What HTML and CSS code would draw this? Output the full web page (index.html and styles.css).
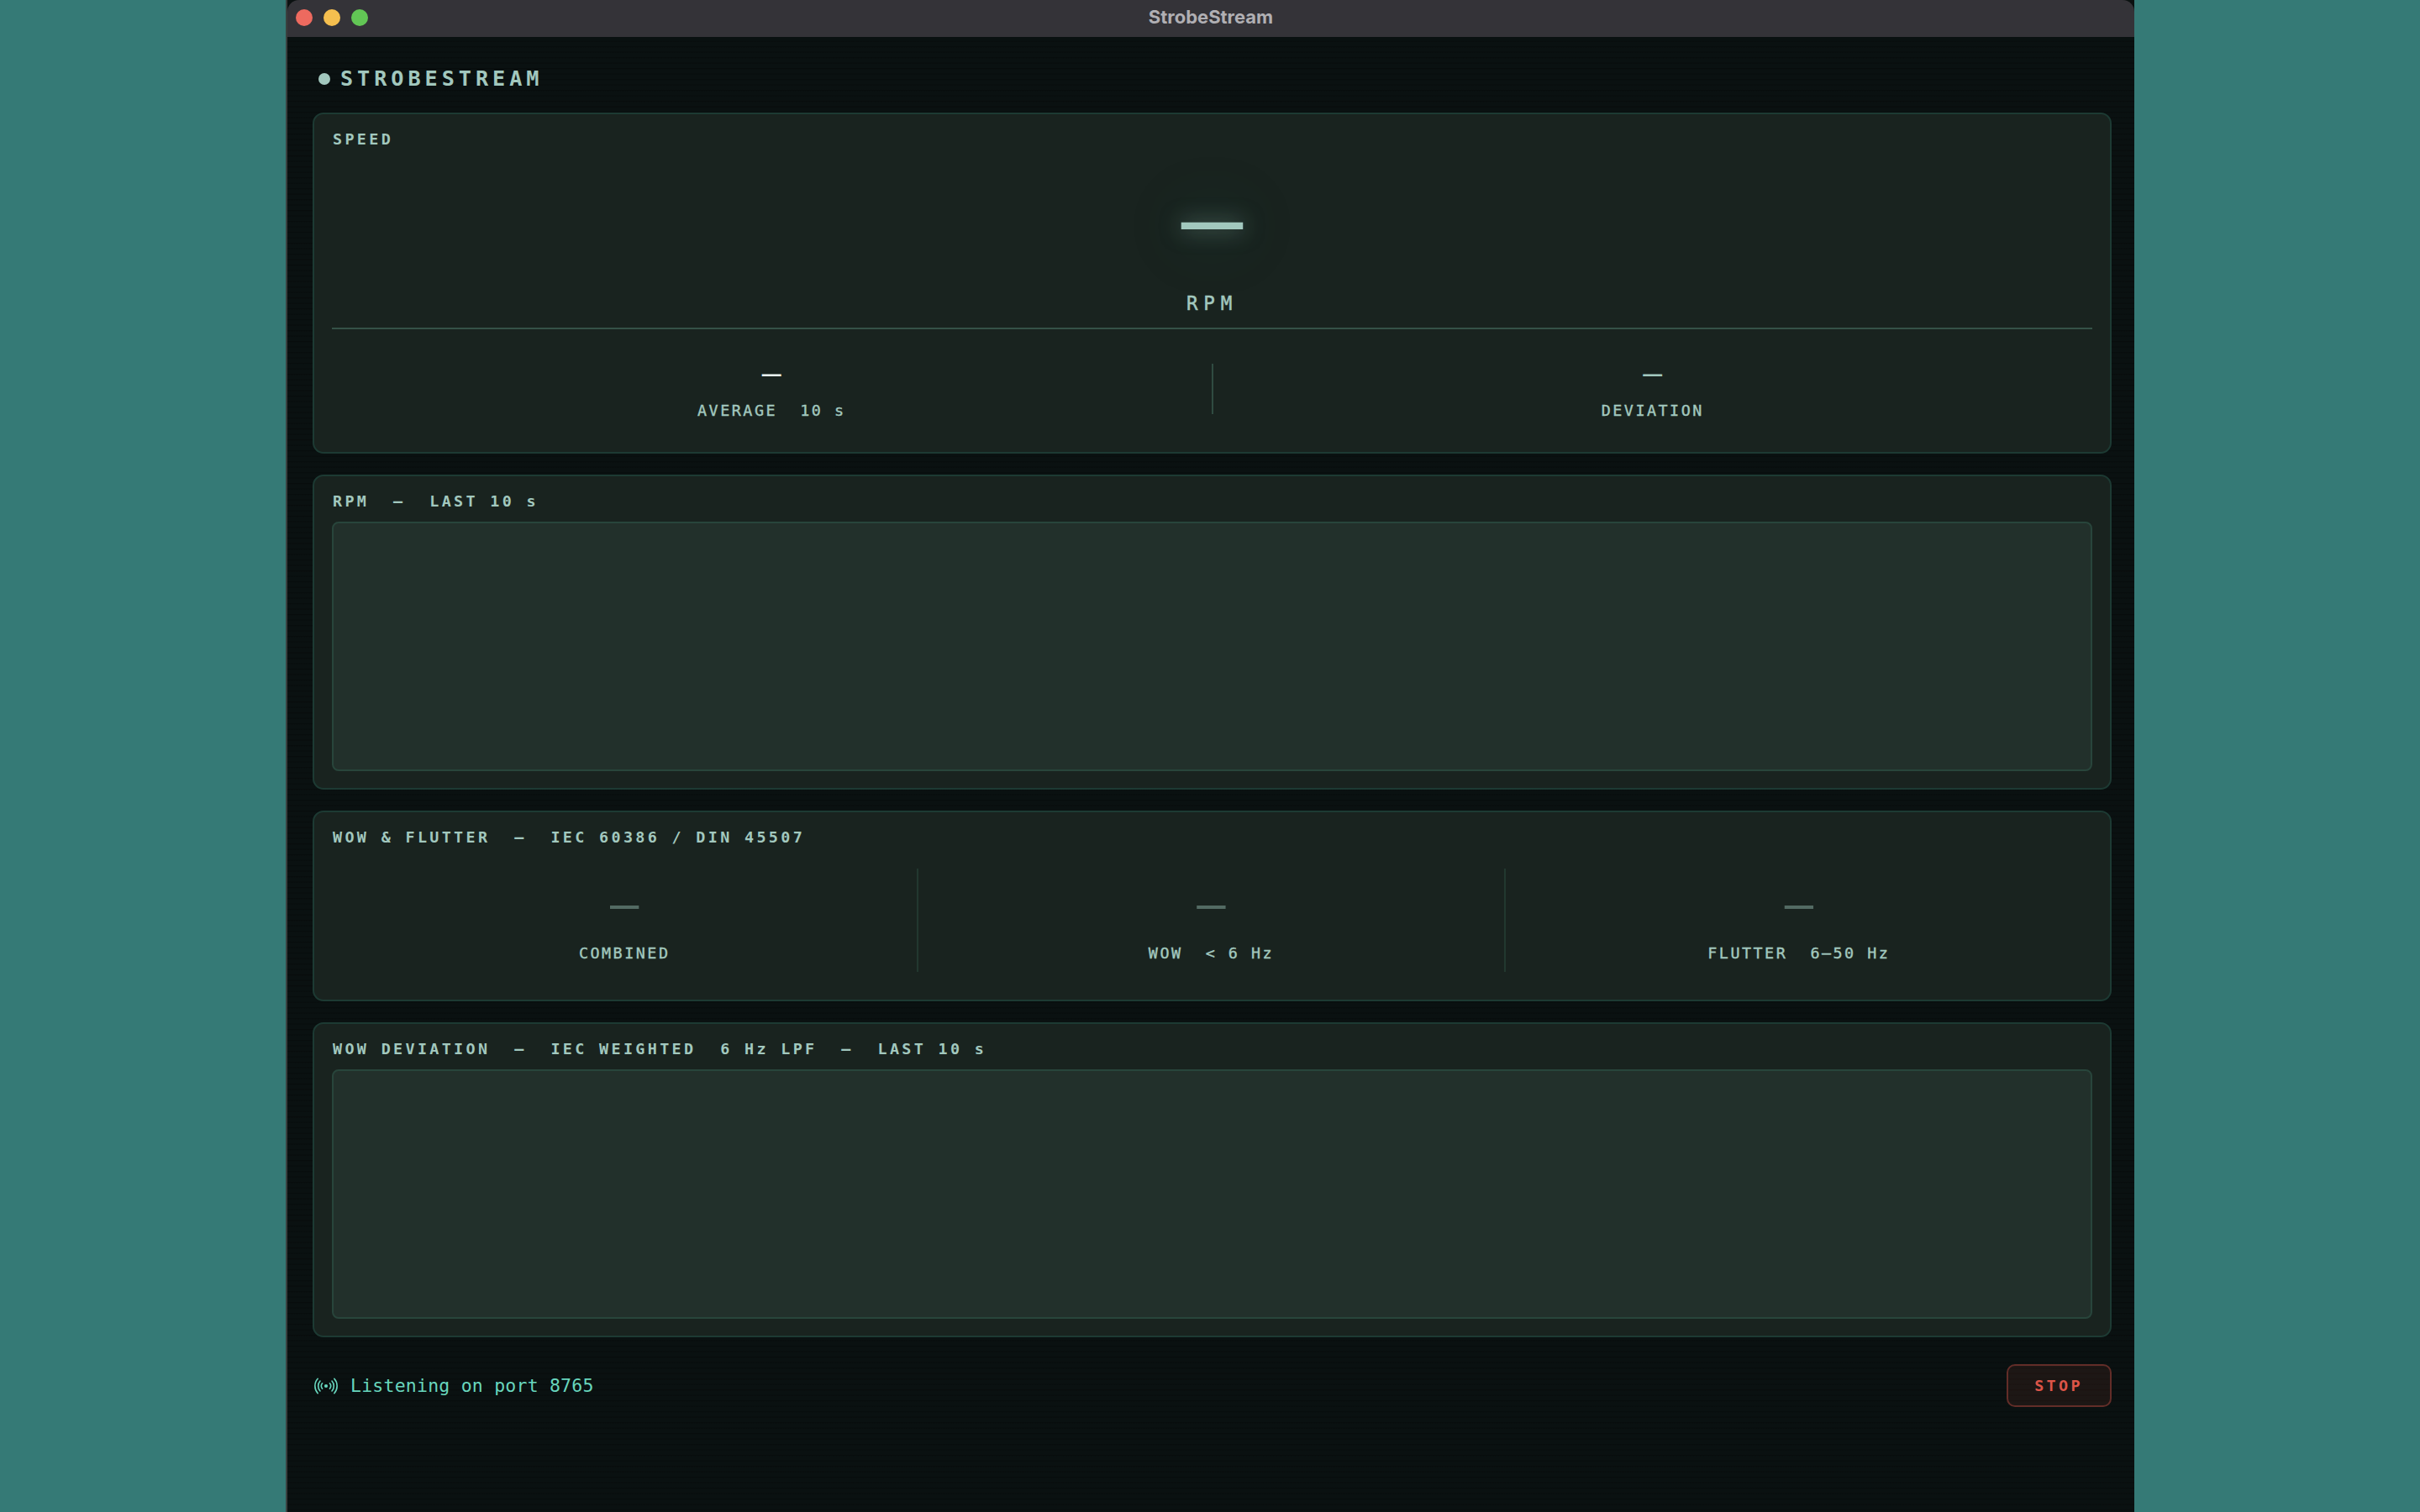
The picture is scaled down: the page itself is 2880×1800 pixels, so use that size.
FILE: index.html
```html
<!DOCTYPE html>
<html lang="en">
<head>
    <meta charset="UTF-8">
    <meta name="viewport" content="width=device-width, initial-scale=1.0">
    <title>StrobeStream</title>
    <link rel="stylesheet" href="styles.css">
</head>
<body>
    <div class="window">
        <header class="titlebar">
            <div class="lights">
                <span class="light red"></span>
                <span class="light yellow"></span>
                <span class="light green"></span>
            </div>
            <span class="window-title">StrobeStream</span>
        </header>
        <main class="app">
            <h1 class="brand"><span class="brand-dot"></span>STROBESTREAM</h1>

            <section class="card speed">
                <h2 class="card-label">SPEED</h2>
                <div class="rpm-value">—</div>
                <div class="rpm-unit">RPM</div>
                <div class="stats">
                    <div class="stat">
                        <div class="stat-value bright">—</div>
                        <div class="caption">AVERAGE  10 s</div>
                    </div>
                    <div class="stat-divider"></div>
                    <div class="stat">
                        <div class="stat-value">—</div>
                        <div class="caption">DEVIATION</div>
                    </div>
                </div>
            </section>

            <section class="card graph">
                <h2 class="card-label">RPM  —  LAST 10 s</h2>
                <div class="chart"></div>
            </section>

            <section class="card flutter">
                <h2 class="card-label">WOW &amp; FLUTTER  —  IEC 60386 / DIN 45507</h2>
                <div class="meters">
                    <div class="meter">
                        <div class="meter-value">—</div>
                        <div class="caption">COMBINED</div>
                    </div>
                    <div class="meter">
                        <div class="meter-value">—</div>
                        <div class="caption">WOW  &lt; 6 Hz</div>
                    </div>
                    <div class="meter">
                        <div class="meter-value">—</div>
                        <div class="caption">FLUTTER  6–50 Hz</div>
                    </div>
                </div>
            </section>

            <section class="card graph">
                <h2 class="card-label">WOW DEVIATION  —  IEC WEIGHTED  6 Hz LPF  —  LAST 10 s</h2>
                <div class="chart"></div>
            </section>

            <footer class="footer">
                <div class="status">
                    <svg class="status-icon" width="30" height="22" viewBox="0 0 30 22" fill="none" stroke="currentColor" stroke-width="1.6" stroke-linecap="round">
                        <circle cx="15" cy="11" r="2.1" fill="currentColor" stroke="none"/>
                        <path d="M10.6 7.8a5 5 0 0 0 0 6.4M19.4 7.8a5 5 0 0 1 0 6.4"/>
                        <path d="M8 5a9 9 0 0 0 0 12M22 5a9 9 0 0 1 0 12"/>
                        <path d="M5.2 2.3a13 13 0 0 0 0 17.4M24.8 2.3a13 13 0 0 1 0 17.4"/>
                    </svg>
                    <span>Listening on port 8765</span>
                </div>
                <button class="stop">STOP</button>
            </footer>
        </main>
    </div>
</body>
</html>
```

FILE: styles.css
```css
* {
    box-sizing: border-box;
}
body {
    margin: 0;
    height: 100vh;
    overflow: hidden;
    display: flex;
    justify-content: center;
    background-color: #357a76;
    font-family: "DejaVu Sans Mono", "Liberation Mono", monospace;
    color: #a2c8be;
}
h1, h2 {
    margin: 0;
}
.window {
    width: 2200px;
    height: 1800px;
    display: flex;
    flex-direction: column;
    background-color: #0b1111;
    border-left: 2px solid #39403f;
}
.titlebar {
    height: 44px;
    flex: none;
    display: grid;
    grid-template-columns: 1fr auto 1fr;
    align-items: center;
    background-color: #343338;
    border-radius: 14px 14px 0 0;
}
.lights {
    display: flex;
    gap: 13px;
    padding: 0 0 2px 10px;
}
.light {
    width: 20px;
    height: 20px;
    border-radius: 50%;
}
.red {
    background-color: #ed6a5f;
}
.yellow {
    background-color: #f5bf4f;
}
.green {
    background-color: #62c655;
}
.window-title {
    font-family: Inter, sans-serif;
    font-size: 22px;
    font-weight: 700;
    line-height: 40px;
    padding-bottom: 4px;
    color: #b0afb3;
}
.app {
    flex: 1;
    display: flex;
    flex-direction: column;
    gap: 25px;
    padding: 0 27px 0 30px;
    background: repeating-linear-gradient(to bottom, #0a1111 0, #0a1111 4px, #080d0d 5px, #0a1111 6.5px);
}
.brand {
    height: 65px;
    padding: 34px 0 0 7px;
    display: flex;
    align-items: center;
    gap: 12px;
    font-size: 25.2px;
    line-height: 30px;
    letter-spacing: 4.95px;
}
.brand-dot {
    width: 14px;
    height: 14px;
    border-radius: 50%;
    background-color: #a2c8be;
}
.card {
    padding: 17px 21px 0;
    background-color: #19231f;
    border: 2px solid #1d3a33;
    border-radius: 13px;
}
.card-label {
    padding-left: 1px;
    font-size: 18.4px;
    line-height: 26px;
    letter-spacing: 3.34px;
    white-space: pre;
}
.speed {
    height: 406px;
    display: flex;
    flex-direction: column;
}
.rpm-value {
    height: 164px;
    line-height: 163px;
    text-align: center;
    font-size: 122px;
    text-shadow: 0 0 26px rgba(162, 200, 190, 0.5), 0 0 80px rgba(40, 150, 125, 0.4);
}
.rpm-unit {
    height: 47px;
    line-height: 36px;
    text-align: center;
    font-size: 22.5px;
    letter-spacing: 6.8px;
    -webkit-text-stroke: 0.5px currentColor;
}
.stats {
    flex: 1;
    display: flex;
    justify-content: center;
    border-top: 2px solid #355247;
    padding-top: 41px;
}
.stat {
    flex: 1;
    text-align: center;
}
.stat-value {
    height: 41px;
    line-height: 23px;
    font-size: 38px;
}
.bright {
    color: #e9f5f0;
}
.stat-divider {
    width: 2px;
    height: 60px;
    background-color: #2f4b41;
}
.caption {
    font-size: 18.4px;
    line-height: 30px;
    letter-spacing: 2.5px;
    white-space: pre;
    -webkit-text-stroke: 0.4px currentColor;
}
.graph {
    height: 375px;
}
.chart {
    height: 297px;
    margin-top: 11px;
    background-color: #22302b;
    border: 2px solid #28453b;
    border-radius: 8px;
}
.flutter {
    height: 227px;
}
.meters {
    display: grid;
    grid-template-columns: repeat(3, 1fr);
    margin-top: 24px;
}
.meter {
    height: 123px;
    padding-top: 20px;
    text-align: center;
}
/* the rule sits at the end of the column so the values stay centred */
.meter:not(:last-child) {
    border-right: 2px solid #22382f;
}
.meter-value {
    height: 66px;
    line-height: 45px;
    font-size: 57px;
    color: #536b63;
}
.footer {
    display: flex;
    align-items: center;
    justify-content: space-between;
    margin-top: 7px;
}
.status {
    display: flex;
    align-items: center;
    gap: 14px;
    color: #68d6bd;
    font-size: 21.5px;
    letter-spacing: 0.22px;
}
.status-icon {
    margin-left: 1px;
}
.stop {
    width: 125px;
    height: 51px;
    padding: 0 1px 0 0;
    font-family: inherit;
    font-size: 18.4px;
    font-weight: 700;
    letter-spacing: 3.34px;
    color: #dc5548;
    background-color: rgba(220, 85, 72, 0.09);
    border: 2px solid #622d28;
    border-radius: 10px;
}
```
